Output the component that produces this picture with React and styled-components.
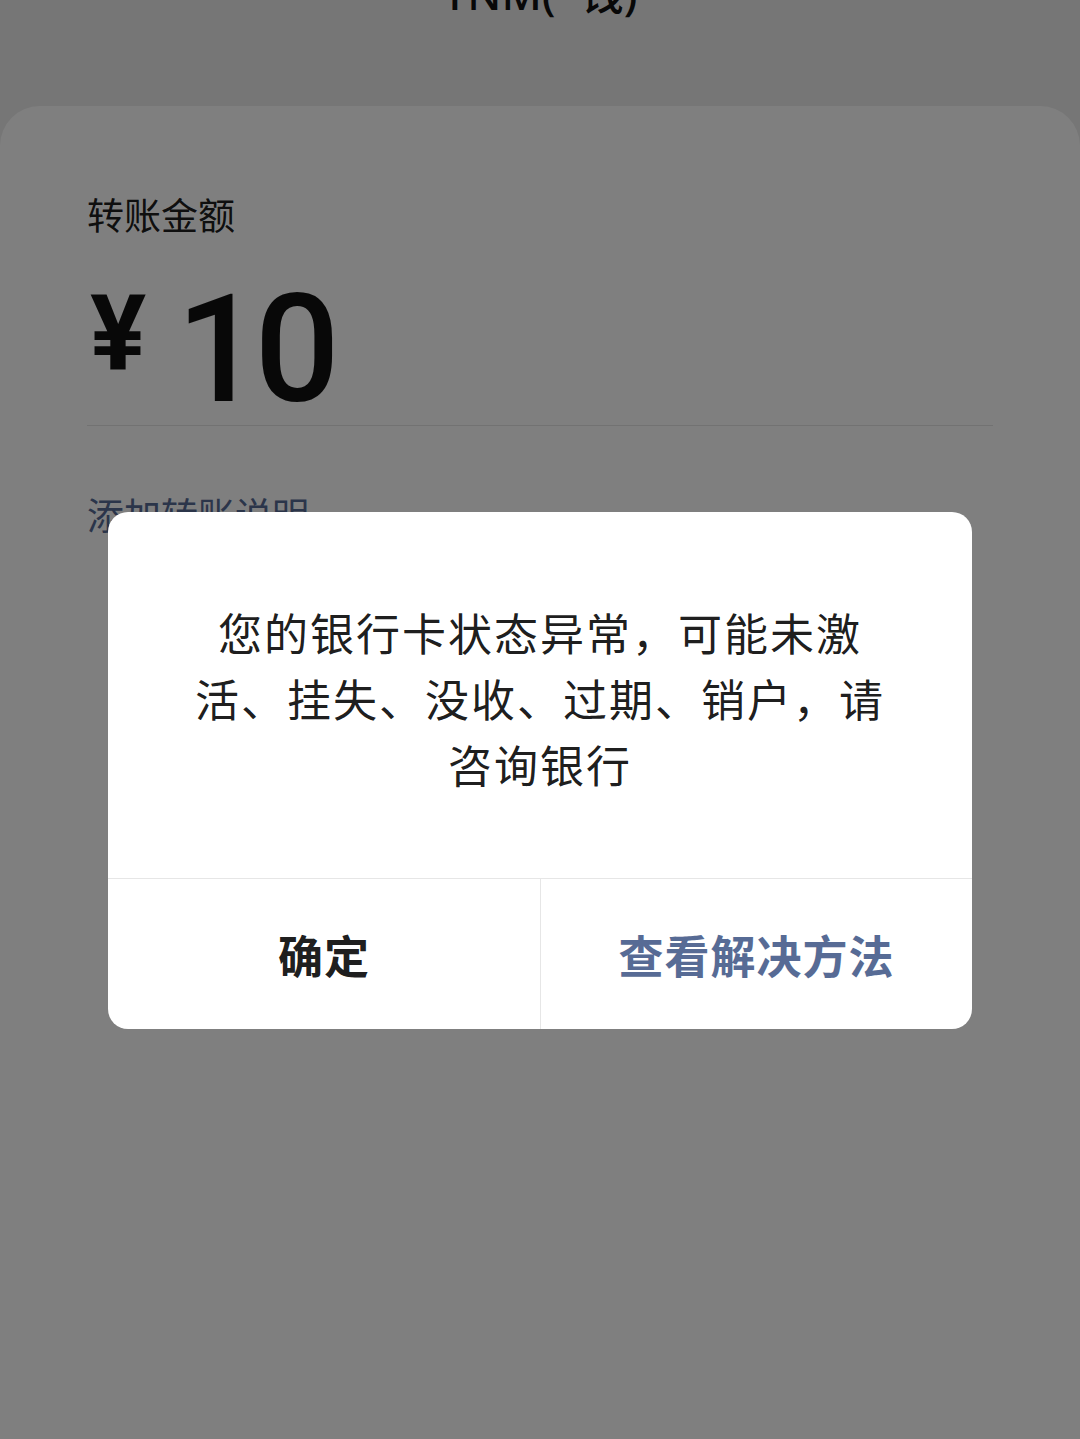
import styled, { createGlobalStyle } from "styled-components";

const GlobalStyle = createGlobalStyle`
  html, body {
    margin: 0;
    padding: 0;
    background: #ededed;
  }
  body {
    font-family: "Noto Sans", "Noto Sans CJK SC", sans-serif;
    overflow: hidden;
  }
`;

const Page = styled.div`
  width: 1080px;
  height: 1439px;
  display: flex;
  flex-direction: column;
  background: #ededed;
  position: relative;
  overflow: hidden;
`;

const Header = styled.div`
  height: 106px;
  display: flex;
  justify-content: center;
  align-items: flex-start;
  flex-shrink: 0;
`;

const Title = styled.div`
  margin-top: -29px;
  font-size: 44px;
  line-height: 1;
  font-weight: 500;
  color: #111;
`;

const Card = styled.div`
  flex: 1;
  background: #fff;
  border-radius: 40px 40px 0 0;
  padding: 82px 87px 0;
  display: flex;
  flex-direction: column;
`;

const Label = styled.div`
  font-family: "Noto Sans CJK SC", sans-serif;
  font-size: 37px;
  line-height: 52px;
  color: rgba(0, 0, 0, 0.9);
`;

const AmountRow = styled.div`
  margin-top: 30px;
  display: flex;
  align-items: flex-start;
  border-bottom: 1px solid rgba(0, 0, 0, 0.1);
`;

const Yen = styled.span`
  font-family: Roboto, "Liberation Sans", sans-serif;
  font-size: 105px;
  line-height: 1;
  font-weight: 700;
  margin-top: 12px;
  margin-left: 3px;
  margin-right: 30px;
  color: #111;
`;

const Digits = styled.span`
  font-family: Roboto, "Liberation Sans", sans-serif;
  font-size: 150px;
  line-height: 1;
  font-weight: 500;
  letter-spacing: -7px;
  margin-top: 5px;
  color: #111;
`;

const AddNote = styled.div`
  margin-top: 62px;
  font-family: "Noto Sans CJK SC", sans-serif;
  font-size: 37px;
  line-height: 52px;
  color: #576b95;
`;

const Mask = styled.div`
  position: absolute;
  inset: 0;
  background: rgba(0, 0, 0, 0.5);
  display: flex;
  flex-direction: column;
  align-items: center;
  padding-top: 512px;
  box-sizing: border-box;
`;

const Dialog = styled.div`
  width: 864px;
  background: #fff;
  border-radius: 20px;
  overflow: hidden;
  display: flex;
  flex-direction: column;
`;

const Message = styled.div`
  padding: 87px 60px 81px;
  font-family: "Noto Sans CJK SC", sans-serif;
  font-size: 44px;
  line-height: 66px;
  letter-spacing: 2px;
  text-align: center;
  color: rgba(0, 0, 0, 0.9);
`;

const Actions = styled.div`
  display: grid;
  grid-template-columns: 1fr 1fr;
  height: 150px;
  border-top: 1px solid #e6e6e6;
`;

const Action = styled.button`
  border: none;
  background: none;
  padding: 0;
  font-family: "Noto Sans CJK SC", sans-serif;
  font-size: 45px;
  font-weight: 700;
  letter-spacing: 1px;
  color: ${(p) => (p.$primary ? "#576b95" : "rgba(0, 0, 0, 0.9)")};
  & + & {
    border-left: 1px solid #e6e6e6;
  }
`;

export default function App() {
  return (
    <>
      <GlobalStyle />
      <Page>
        <Header>
          <Title>TNM(*钱)</Title>
        </Header>
        <Card>
          <Label>转账金额</Label>
          <AmountRow>
            <Yen>¥</Yen>
            <Digits>10</Digits>
          </AmountRow>
          <AddNote>添加转账说明</AddNote>
        </Card>
        <Mask>
          <Dialog>
            <Message>
              您的银行卡状态异常，可能未激
              <br />
              活、挂失、没收、过期、销户，请
              <br />
              咨询银行
            </Message>
            <Actions>
              <Action>确定</Action>
              <Action $primary>查看解决方法</Action>
            </Actions>
          </Dialog>
        </Mask>
      </Page>
    </>
  );
}
